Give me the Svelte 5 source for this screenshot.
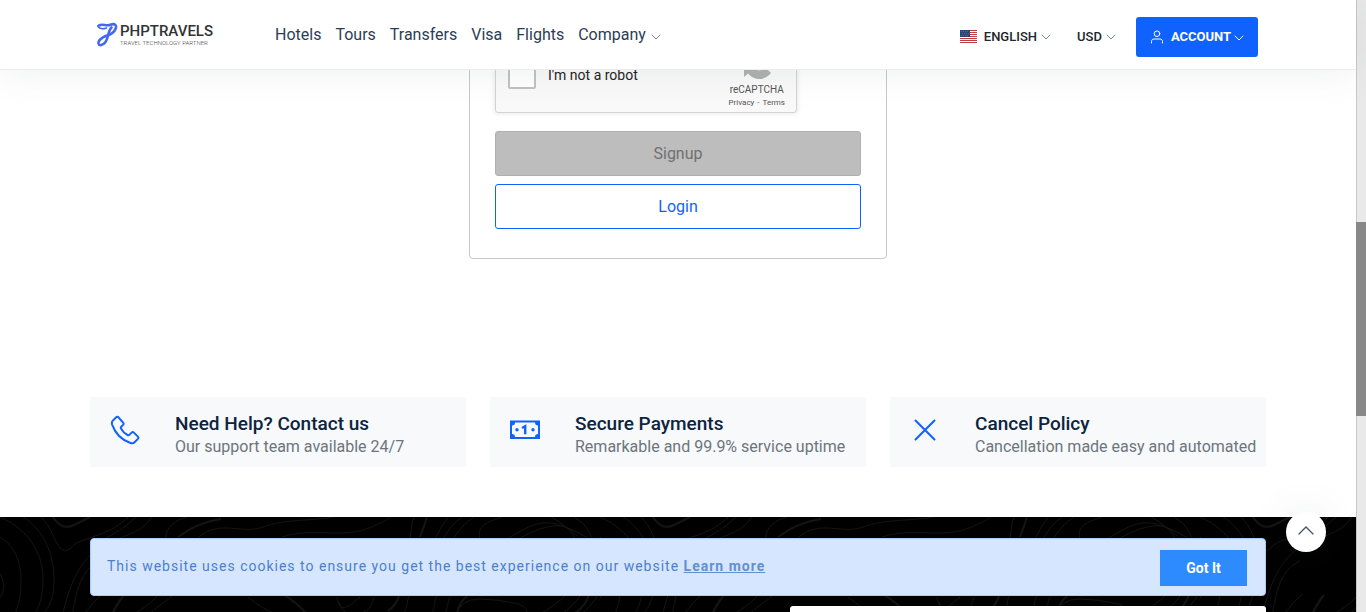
<script>
  const links = ['Hotels', 'Tours', 'Transfers', 'Visa', 'Flights'];
  const features = [
    { icon: 'phone', title: 'Need Help? Contact us', text: 'Our support team available 24/7' },
    { icon: 'cash', title: 'Secure Payments', text: 'Remarkable and 99.9% service uptime' },
    { icon: 'cross', title: 'Cancel Policy', text: 'Cancellation made easy and automated' }
  ];
  const stripes = [0, 2, 4, 6, 8, 10, 12];
</script>

{#snippet chevron()}
  <svg class="chevron" width="10" height="6" viewBox="0 0 10 6" aria-hidden="true">
    <path d="M1 1l4 4 4-4" fill="none" stroke="currentColor" stroke-linecap="round" />
  </svg>
{/snippet}

<div class="window">
  <div class="page">
    <header>
      <div class="container bar">
        <a class="logo" href="#home">
          <svg width="21" height="26" viewBox="0 0 21 26" aria-hidden="true">
            <g fill="none" stroke="#4468f2" stroke-linecap="round">
              <path d="M1.500 3.800C5.500 .8 9 4.800 13.500 2.800 18 1 20 3.500 18.500 7c-1.500 4-5 5.500-9 6.800" stroke-width="2.600" />
              <path d="M1 4.500c2 2.700 5.500 2.600 8.500 1.400" stroke-width="1.600" />
              <path d="M14.500 5.500C11 8.500 11.500 16 8.500 20c-2.500 3.500-6.500 4-7 1.500-.5-3 4-6 7-7.500" stroke-width="2.600" />
            </g>
          </svg>
          <span class="brand">
            <span class="name">PHPTRAVELS</span>
            <span class="tagline">TRAVEL TECHNOLOGY PARTNER</span>
          </span>
        </a>
        <nav>
          {#each links as link}
            <a href="#{link.toLowerCase()}">{link}</a>
          {/each}
          <a href="#company">Company {@render chevron()}</a>
        </nav>
        <div class="tools">
          <button class="pick" type="button">
            <svg class="flag" width="17" height="13" viewBox="0 0 17 13" aria-hidden="true">
              <rect width="17" height="13" fill="#fff" />
              {#each stripes as y}
                <rect {y} width="17" height="1" fill="#bd3d44" />
              {/each}
              <rect width="10" height="7" fill="#2f4474" />
              <path d="M1 1.500h8M2 3.500h7M1 5.500h8" stroke="#6d7fa5" stroke-width=".6" stroke-dasharray="1 1" />
            </svg>
            ENGLISH {@render chevron()}
          </button>
          <button class="pick" type="button">USD {@render chevron()}</button>
          <button class="account" type="button">
            <svg width="14" height="14" viewBox="0 0 14 14" aria-hidden="true">
              <g fill="none" stroke="#fff" stroke-linecap="round">
                <circle cx="7" cy="3.700" r="2.800" />
                <path d="M1.500 13v-1.500c0-1.500 1-2.500 2.500-2.500h6c1.500 0 2.500 1 2.500 2.500V13" />
              </g>
            </svg>
            <span>ACCOUNT {@render chevron()}</span>
          </button>
        </div>
      </div>
    </header>

    <main>
      <form class="signup">
        <div class="captcha">
          <label><input type="checkbox" />I'm not a robot</label>
          <div class="captcha-brand">
            <svg width="32" height="32" viewBox="0 0 32 32" aria-hidden="true">
              <path d="M29 16a13 13 0 0 0-23-8" fill="none" stroke="#4a90e2" stroke-width="5" />
              <path d="M3 16v13l4-3.600C14 33.500 24 32.500 30 25l-6-6c-2 3.500-7 5-10.500 1.500L17 17H3z" fill="#b0b0b0" />
            </svg>
            <span class="captcha-name">reCAPTCHA</span>
            <span class="captcha-links"><a href="#privacy">Privacy</a><i>-</i><a href="#terms">Terms</a></span>
          </div>
        </div>
        <button class="submit" type="submit" disabled>Signup</button>
        <button class="login" type="button">Login</button>
      </form>

      <section class="container features">
        {#each features as f}
          <article>
            <svg width="30" height="30" viewBox="0 0 30 30" aria-hidden="true">
              {#if f.icon === 'phone'}
                <path
                  d="M6.200 2.300L2.600 5.900C1.600 7 1.800 8.500 2.200 9.800 5.200 18 12 25 20.500 28c1.400.5 2.800.5 3.800-.5l3.600-3.600c.7-.7.7-1.600 0-2.300l-4-4c-.7-.7-1.600-.7-2.300 0l-2.300 2.300c-.5.5-1.200.4-1.800.1-2.900-1.500-5-3.700-6.500-6.500-.3-.6-.3-1.200.2-1.700l1.900-1.900c.7-.7.7-1.600 0-2.300L8.500 2.300c-.7-.7-1.600-.7-2.300 0z"
                  fill="none" stroke="#1062fe" stroke-width="2" stroke-linejoin="round"
                />
              {:else if f.icon === 'cash'}
                <path
                  fill-rule="evenodd" fill="#1062fe"
                  d="M0 5.500h30v18.500H0zM5 7.500a3 3 0 0 1-3 3v8.500a3 3 0 0 1 3 3h20a3 3 0 0 1 3-3v-8.500a3 3 0 0 1-3-3z"
                />
                <circle cx="7" cy="14.800" r="1.700" fill="#1062fe" />
                <circle cx="23" cy="14.800" r="1.700" fill="#1062fe" />
                <path d="M12 13l3.200-1.800v8" fill="none" stroke="#1062fe" stroke-width="2.400" />
              {:else}
                <path d="M5.500 5.500l19 19M24.500 5.500l-19 19" stroke="#1062fe" stroke-width="2" stroke-linecap="round" />
              {/if}
            </svg>
            <div>
              <h2>{f.title}</h2>
              <p>{f.text}</p>
            </div>
          </article>
        {/each}
      </section>
    </main>

    <footer>
      <svg class="contours" width="100%" height="100%" aria-hidden="true">
        <defs>
          <pattern id="contours" width="600" height="100" patternUnits="userSpaceOnUse">
            <g fill="none" stroke="#141414">
              <path d="M0 20C14 28 21 45 21 62s-2 25-7 38M0 57c5 8 5 16 0 24" />
              <path d="M0 0C30 13 43 38 43 62s-6 28-9 38M23 0C44 13 54 38 54 62s-6 28-13 38" />
              <path d="M41 0C52 10 54 25 60 31s9 1 15-4S115 16 128 0" />
              <path d="M101 24C115 16 125 11 136 0M62 100C70 65 82 36 110 25S142 13 152 0M72 100c4-25 8-47 28-56" />
              <path d="M166 21c0-11 8-17 21-21M199 20c20-18 45-2 64-10s50-6 70-10M282 20c30-10 60 2 87-9S386 0 391 0" />
              <path d="M83 100q8-14 20-23M127 100q19-8 32-23M145 100q18-14 30-23M248 80q12 11 34 20" />
              <path d="M337 80c2 16 10 12 23 0M339 85c4 15 17 14 25 10s8-9 10-15" />
              <path d="M407 35C412 20 410 10 414 0M433 28C438 15 440 12 448 0M441 28Q447 10 462 0M452 24q9-16 22-24" />
              <path d="M480 21c-4-11 7-16 22-21M509 21c29-18 40-22 77-1M520 21c30-16 46-16 57-2M574 0c15 9 19 20 22 35M551 0c18 10 24 17 27 31" />
              <path d="M402 100c7-12 4-16 8-23M431 100c5-13 2-16 7-23M444 100c5-13 3-16 8-23M455 100q5-18 24-18t40 5q12 5 6 13" />
              <path d="M535 100q21-12 31-22M558 100q17-12 24-24M578 100q12-9 22-25" />
              <path d="M53 0q9 14 21 8T90 0M420 20q4-10 7-20M178 20q20-15 43-18M111 100q6-14 13-22M283 77q14 9 23 19M388 94q9-6 11-16M457 99q0-12 12-22M575 96q11-7 14-19" stroke-width="2" />
            </g>
          </pattern>
        </defs>
        <rect width="100%" height="100%" fill="url(#contours)" />
      </svg>
      <div class="container"><div class="panel"></div></div>
    </footer>

    <div class="overlay">
      <aside class="cookies">
        <p>This website uses cookies to ensure you get the best experience on our website <a href="#cookies">Learn more</a></p>
        <button type="button">Got It</button>
      </aside>
    </div>
    <button class="to-top" type="button" aria-label="Back to top">
      <svg width="16" height="9" viewBox="0 0 16 9" aria-hidden="true">
        <path d="M1 8l7-7 7 7" fill="none" stroke="#44546a" stroke-width="1.300" stroke-linecap="round" />
      </svg>
    </button>
  </div>
  <div class="scrollbar" aria-hidden="true"><span></span></div>
</div>

<style>
  :global(body) {
    margin: 0;
    background: #fff;
  }
  .window,
  .window * {
    box-sizing: border-box;
  }
  .window {
    display: flex;
    height: 100vh;
    overflow: hidden;
    font-family: Roboto, 'Liberation Sans', sans-serif;
    font-size: 16px;
    line-height: 24px;
    color: #0d233e;
  }
  button {
    font: inherit;
    cursor: pointer;
  }
  a {
    color: inherit;
    text-decoration: none;
  }
  h2,
  p {
    margin: 0;
  }
  .page {
    position: relative;
    flex: 1;
    min-width: 0;
    display: flex;
    flex-direction: column;
  }
  .container {
    width: 100%;
    max-width: 1176px;
    margin: 0 auto;
  }
  header {
    position: relative;
    z-index: 2;
    flex: none;
    background: #fff;
    border-bottom: 1px solid #ececec;
    box-shadow: 0 0 40px rgba(82, 85, 90, 0.1);
  }
  .bar {
    display: flex;
    align-items: center;
    height: 69px;
    padding: 0 8px 0 7px;
  }
  .logo {
    display: flex;
    align-items: center;
    gap: 2px;
    width: 178px;
  }
  .brand {
    display: flex;
    flex-direction: column;
  }
  .name {
    font: 500 15px/16px Roboto, sans-serif;
    color: #333;
  }
  .tagline {
    font: 300 6px/8px Roboto, sans-serif;
    color: #444;
    white-space: nowrap;
  }
  nav {
    display: flex;
    gap: 14px;
    color: #2b3d56;
  }
  .chevron {
    color: #7b8694;
    margin-left: 1px;
  }
  .tools {
    display: flex;
    align-items: center;
    margin-left: auto;
    padding-top: 4px;
  }
  .pick {
    display: flex;
    align-items: center;
    gap: 3px;
    margin-right: 20px;
    padding: 0;
    border: 0;
    background: none;
    font-size: 13px;
    font-weight: 500;
    color: #222529;
  }
  .pick + .pick {
    margin-left: 6px;
  }
  .flag {
    margin-right: 4px;
  }
  .account {
    display: flex;
    align-items: center;
    gap: 7px;
    height: 40px;
    padding: 0 14px;
    border: 0;
    border-radius: 3px;
    background: #1062fe;
    color: #fff;
    font-size: 13px;
    font-weight: 700;
  }
  .account .chevron {
    color: #fff;
    margin: 0;
  }
  .signup {
    display: flex;
    flex-direction: column;
    width: 418px;
    margin: -60px auto 0;
    padding: 26px 25px 29px;
    border: 1px solid #c9c9c9;
    border-radius: 4px;
  }
  .captcha {
    display: flex;
    justify-content: space-between;
    width: 302px;
    height: 76px;
    margin-bottom: 18px;
    padding: 0 11px 0 12px;
    border: 1px solid #d3d3d3;
    border-radius: 3px;
    background: #f9f9f9;
    box-shadow: 0 0 4px 1px rgba(0, 0, 0, 0.08);
    color: #222;
  }
  .captcha label {
    display: flex;
    align-items: center;
    gap: 12px;
    font-size: 14px;
  }
  .captcha input {
    appearance: none;
    width: 28px;
    height: 28px;
    margin: 0;
    border: 2px solid #c1c1c1;
    border-radius: 2px;
    background: #fff;
  }
  .captcha-brand {
    display: flex;
    flex-direction: column;
    align-items: center;
    justify-content: flex-end;
    padding-bottom: 3px;
    color: #555;
  }
  .captcha-name {
    margin-top: 3px;
    font-size: 10px;
    line-height: 13px;
  }
  .captcha-links {
    display: flex;
    gap: 3px;
    font-size: 8px;
    line-height: 13px;
  }
  .submit,
  .login {
    height: 45px;
    border: 1px solid #b0b0b0;
    border-radius: 3px;
    background: #bdbdbd;
    color: #707070;
  }
  .login {
    margin-top: 8px;
    border-color: #1062fe;
    background: #fff;
    color: #1062fe;
  }
  .features {
    display: grid;
    grid-template-columns: repeat(3, 1fr);
    gap: 24px;
    margin-top: 138px;
    margin-bottom: 50px;
  }
  article {
    display: flex;
    gap: 35px;
    height: 70px;
    padding: 15px 0 0 20px;
    background: #f8f9fb;
    white-space: nowrap;
  }
  article svg {
    flex: none;
    margin-top: 3px;
  }
  h2 {
    font-size: 19px;
    font-weight: 500;
    line-height: 24px;
  }
  article p {
    line-height: 22px;
    color: #6c757d;
  }
  footer {
    position: relative;
    flex: 1;
    display: flex;
    min-height: 0;
    padding-top: 89px;
    background: #000;
    overflow: hidden;
  }
  .contours {
    position: absolute;
    inset: 0;
  }
  .panel {
    position: relative;
    width: 476px;
    height: 60px;
    margin-left: auto;
    border-radius: 3px;
    background: #fff;
  }
  .overlay {
    position: absolute;
    inset: auto 0 16px;
    z-index: 3;
  }
  .cookies {
    display: flex;
    align-items: flex-start;
    justify-content: space-between;
    max-width: 1176px;
    height: 58px;
    margin: 0 auto;
    padding: 11px 18px 0 16px;
    border: 1px solid #a9cbfb;
    border-radius: 4px;
    background: #d7e6ff;
    color: #4a80cb;
    font-size: 14px;
    letter-spacing: 1px;
  }
  .cookies p {
    padding-top: 4px;
  }
  .cookies a {
    color: #6090d0;
    font-weight: 700;
    text-decoration: underline;
  }
  .cookies button {
    width: 87px;
    height: 36px;
    padding: 0;
    border: 0;
    background: #2e8bff;
    color: #fff;
    font-weight: 700;
    letter-spacing: 0;
  }
  .to-top {
    position: absolute;
    right: 30px;
    bottom: 60px;
    z-index: 3;
    display: grid;
    place-items: center;
    width: 40px;
    height: 40px;
    padding: 0 0 4px;
    border: 0;
    border-radius: 50%;
    background: #fff;
    box-shadow: 0 0 40px rgba(82, 85, 90, 0.1);
  }
  .scrollbar {
    display: grid;
    grid-template-rows: 222fr 194fr 196fr;
    width: 10px;
    border-left: 1px solid #c8c8c8;
    background: #e9e9e9;
  }
  .scrollbar span {
    grid-row: 2;
    margin-left: -1px;
    background: #888;
  }
</style>
